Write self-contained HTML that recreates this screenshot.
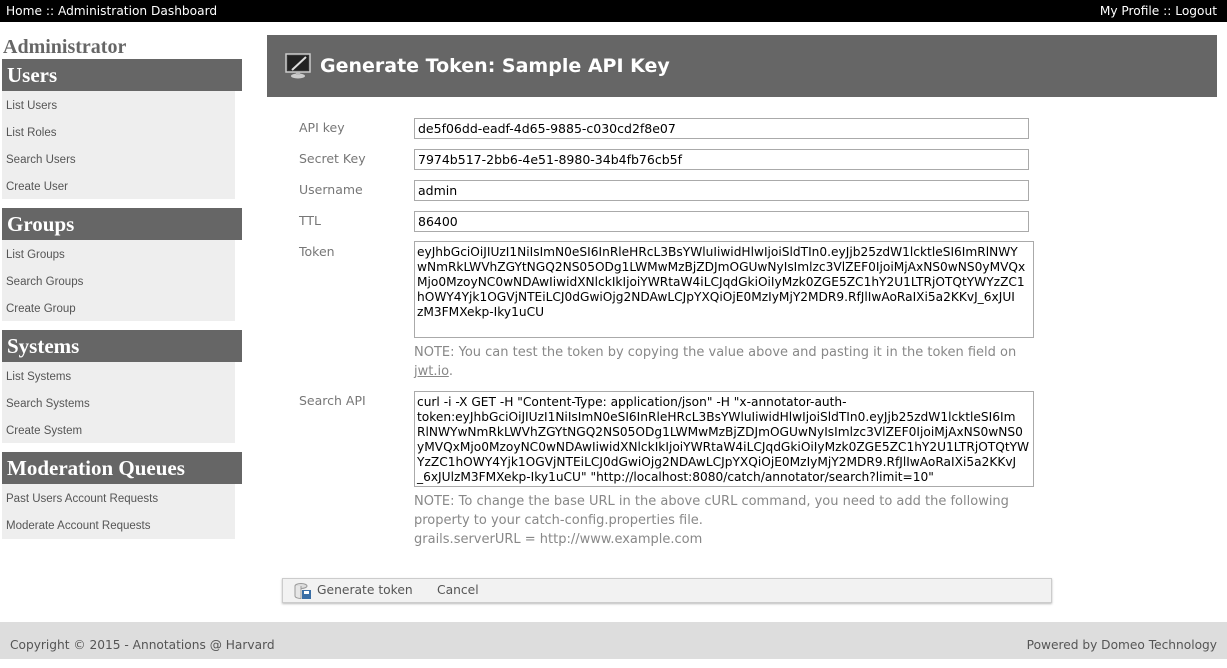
<!DOCTYPE html>
<html><head><meta charset="utf-8"><style>
*{margin:0;padding:0;box-sizing:border-box}
body{width:1227px;height:659px;position:relative;background:#fff;font-family:"DejaVu Sans","Liberation Sans",sans-serif;overflow:hidden}
.top{position:absolute;left:0;top:0;width:1227px;height:22px;background:#000;color:#fff;font-size:12.2px;line-height:22px}
.top .l{position:absolute;left:6px}.top .r{position:absolute;right:10px}
.adm{position:absolute;left:3px;top:36px;font:bold 20px "Liberation Serif",serif;color:#666}
.sh{position:absolute;left:2px;width:240px;height:32px;background:#666;color:#fff;font:bold 21px "Liberation Serif",serif;line-height:32px;padding-left:5px}
.sm{position:absolute;left:2px;width:233px;background:#eee;padding-top:1px}
.sm div{height:27px;font:11.5px "Liberation Sans",sans-serif;line-height:29px;color:#555;padding-left:4px}
.hdr{position:absolute;left:267px;top:35px;width:950px;height:62px;background:#666;color:#fff;font-weight:bold;font-size:19px;line-height:62px;padding-left:53px}
.lab{position:absolute;left:299px;font-size:12.5px;color:#777}
.inp{position:absolute;left:414px;width:615px;height:21px;border:1px solid #aaa;font-size:12.5px;line-height:19px;padding-left:3px;color:#000}
.ta{position:absolute;left:414px;width:620px;border:1px solid #aaa;font-size:12.2px;line-height:15px;padding:3px 2px;color:#000;white-space:nowrap;overflow:hidden}
.note{position:absolute;left:414px;font-size:13px;color:#888;line-height:19px}
.btn{position:absolute;left:282px;top:578px;width:770px;height:25px;background:#f2f2f2;border:1px solid #ccc;box-shadow:0 1px 2px #bbb;font-size:12.3px;color:#555;line-height:22px}
.foot{position:absolute;left:0;top:622px;width:1227px;height:37px;background:#ddd;font-size:12.2px;color:#555;line-height:46px}
</style></head><body>
<div class="top"><span class="l">Home :: Administration Dashboard</span><span class="r">My Profile :: Logout</span></div>
<div class="adm">Administrator</div>
<div class="sh" style="top:59px">Users</div>
<div class="sm" style="top:91px;height:108px"><div>List Users</div><div>List Roles</div><div>Search Users</div><div>Create User</div></div>
<div class="sh" style="top:208px">Groups</div>
<div class="sm" style="top:240px;height:81px"><div>List Groups</div><div>Search Groups</div><div>Create Group</div></div>
<div class="sh" style="top:330px">Systems</div>
<div class="sm" style="top:362px;height:81px"><div>List Systems</div><div>Search Systems</div><div>Create System</div></div>
<div class="sh" style="top:452px">Moderation Queues</div>
<div class="sm" style="top:484px;height:55px"><div>Past Users Account Requests</div><div>Moderate Account Requests</div></div>

<div class="hdr">Generate Token: Sample API Key
<svg style="position:absolute;left:17px;top:17px" width="28" height="28" viewBox="0 0 28 28"><rect x="2" y="2" width="24" height="18" fill="#333" stroke="#ccc" stroke-width="1.5"/><rect x="4" y="4" width="20" height="14" fill="#222"/><path d="M8 18 L22 5" stroke="#ddd" stroke-width="2"/><ellipse cx="14" cy="24" rx="7" ry="2.5" fill="#ccc"/><rect x="12" y="20" width="4" height="3" fill="#bbb"/></svg></div>

<div class="lab" style="top:120px">API key</div><div class="inp" style="top:118px">de5f06dd-eadf-4d65-9885-c030cd2f8e07</div>
<div class="lab" style="top:151px">Secret Key</div><div class="inp" style="top:149px">7974b517-2bb6-4e51-8980-34b4fb76cb5f</div>
<div class="lab" style="top:182px">Username</div><div class="inp" style="top:180px">admin</div>
<div class="lab" style="top:213px">TTL</div><div class="inp" style="top:211px">86400</div>
<div class="lab" style="top:244px">Token</div>
<div class="ta" style="top:241px;height:97px">eyJhbGciOiJIUzI1NiIsImN0eSI6InRleHRcL3BsYWluIiwidHlwIjoiSldTIn0.eyJjb25zdW1lcktleSI6ImRlNWY<br>wNmRkLWVhZGYtNGQ2NS05ODg1LWMwMzBjZDJmOGUwNyIsImlzc3VlZEF0IjoiMjAxNS0wNS0yMVQx<br>Mjo0MzoyNC0wNDAwIiwidXNlckIkIjoiYWRtaW4iLCJqdGkiOiIyMzk0ZGE5ZC1hY2U1LTRjOTQtYWYzZC1<br>hOWY4Yjk1OGVjNTEiLCJ0dGwiOjg2NDAwLCJpYXQiOjE0MzIyMjY2MDR9.RfJlIwAoRaIXi5a2KKvJ_6xJUI<br>zM3FMXekp-Iky1uCU</div>
<div class="note" style="top:343px">NOTE: You can test the token by copying the value above and pasting it in the token field on<br><span style="text-decoration:underline">jwt.io</span>.</div>
<div class="lab" style="top:393px">Search API</div>
<div class="ta" style="top:391px;height:96px">curl -i -X GET -H "Content-Type: application/json" -H "x-annotator-auth-<br>token:eyJhbGciOiJIUzI1NiIsImN0eSI6InRleHRcL3BsYWluIiwidHlwIjoiSldTIn0.eyJjb25zdW1lcktleSI6Im<br>RlNWYwNmRkLWVhZGYtNGQ2NS05ODg1LWMwMzBjZDJmOGUwNyIsImlzc3VlZEF0IjoiMjAxNS0wNS0<br>yMVQxMjo0MzoyNC0wNDAwIiwidXNlckIkIjoiYWRtaW4iLCJqdGkiOiIyMzk0ZGE5ZC1hY2U1LTRjOTQtYW<br>YzZC1hOWY4Yjk1OGVjNTEiLCJ0dGwiOjg2NDAwLCJpYXQiOjE0MzIyMjY2MDR9.RfJlIwAoRaIXi5a2KKvJ<br>_6xJUlzM3FMXekp-Iky1uCU" "http://localhost:8080/catch/annotator/search?limit=10"</div>
<div class="note" style="top:492px">NOTE: To change the base URL in the above cURL command, you need to add the following<br>property to your catch-config.properties file.<br>grails.serverURL = http://www.example.com</div>

<div class="btn"><svg style="position:absolute;left:11px;top:4px" width="18" height="17" viewBox="0 0 18 17"><ellipse cx="7" cy="3" rx="6" ry="2.5" fill="#ddd" stroke="#999"/><path d="M1 3v10c0 1.5 3 2.5 6 2.5V3" fill="#e6e6e6" stroke="#999"/><rect x="8" y="7" width="9" height="9" fill="#3a6ea5"/><rect x="10" y="8" width="5" height="3" fill="#fff"/></svg><span style="position:absolute;left:34px">Generate token</span><span style="position:absolute;left:154px">Cancel</span></div>
<div class="foot"><span style="position:absolute;left:10px">Copyright © 2015 - Annotations @ Harvard</span><span style="position:absolute;right:10px">Powered by Domeo Technology</span></div>
</body></html>
